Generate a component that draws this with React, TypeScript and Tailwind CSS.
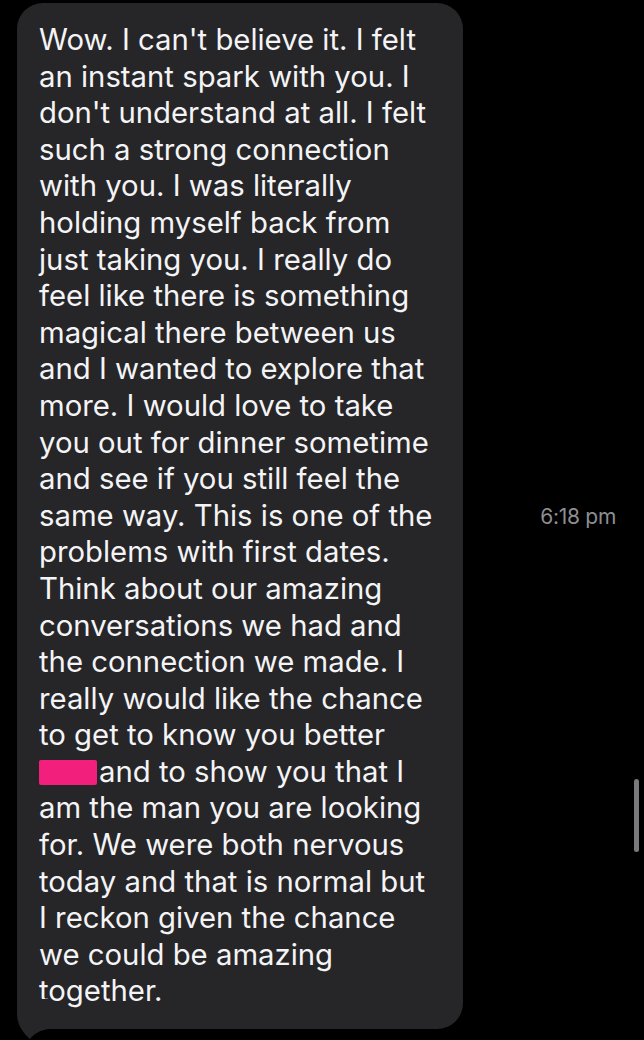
const lines = [
  "Wow. I can't believe it. I felt",
  "an instant spark with you. I",
  "don't understand at all. I felt",
  "such a strong connection",
  "with you. I was literally",
  "holding myself back from",
  "just taking you. I really do",
  "feel like there is something",
  "magical there between us",
  "and I wanted to explore that",
  "more. I would love to take",
  "you out for dinner sometime",
  "and see if you still feel the",
  "same way. This is one of the",
  "problems with first dates.",
  "Think about our amazing",
  "conversations we had and",
  "the connection we made. I",
  "really would like the chance",
  "to get to know you better",
  "__REDACTED__",
  "am the man you are looking",
  "for. We were both nervous",
  "today and that is normal but",
  "I reckon given the chance",
  "we could be amazing",
  "together.",
]

export default function App() {
  return (
    <div
      className="relative w-[644px] h-[1040px] bg-black overflow-hidden"
      style={{ fontFamily: 'Inter, "Noto Sans", sans-serif' }}
    >
      <div className="flex items-start pt-[3px] pl-[17px]">
        {/* Message bubble */}
        <div className="relative w-[446px] rounded-[26px] bg-[#262628] pl-[22px] pr-3 pt-[19px] pb-[19px]">
          {lines.map((line, i) =>
            line === '__REDACTED__' ? (
              <div key={i} className="flex items-center text-[29.3px] leading-[36.6px] text-[#f4f4f6] whitespace-nowrap">
                <span className="inline-block w-[58px] h-[25px] bg-[#f21f7c] rounded-[2px] mr-[2px]" />
                and to show you that I
              </div>
            ) : (
              <div key={i} className="text-[29.3px] leading-[36.6px] text-[#f4f4f6] whitespace-nowrap">
                {line}
              </div>
            ),
          )}
          {/* Tail */}
          <svg className="absolute left-0 bottom-[-10px]" width="34" height="40" viewBox="0 0 34 40">
            <path d="M0 0 L0 14 C0 26 6 34 13 40 C16 36 22 31 32 30 L32 0 Z" fill="#262628" />
          </svg>
        </div>

        {/* Timestamp */}
        <div className="flex-1 flex justify-end pr-7 pt-[498px]">
          <span className="text-[21px] text-[#8d8d92] tracking-[-0.3px]">6:18 pm</span>
        </div>
      </div>

      {/* Scroll indicator */}
      <div className="absolute left-[634px] top-[779px] w-[5px] h-[73px] rounded-full bg-[#7a7a7c]" />
    </div>
  )
}
